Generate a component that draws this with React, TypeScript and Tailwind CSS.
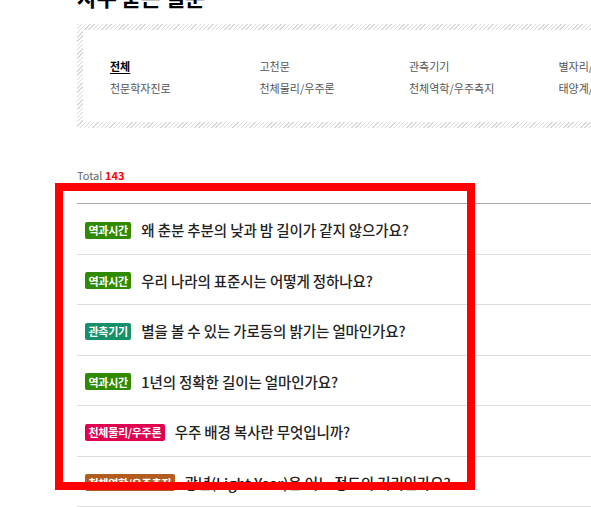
import React from "react";

type Faq = {
  category: string;
  title: string;
};

const badgeColors: Record<string, string> = {
  역과시간: "bg-[#2f8a00]",
  관측기기: "bg-[#16906a]",
  "천체물리/우주론": "bg-[#e1004f]",
  "천체역학/우주측지": "bg-[#b25c1f]",
};

const faqs: Faq[] = [
  { category: "역과시간", title: "왜 춘분 추분의 낮과 밤 길이가 같지 않으가요?" },
  { category: "역과시간", title: "우리 나라의 표준시는 어떻게 정하나요?" },
  { category: "관측기기", title: "별을 볼 수 있는 가로등의 밝기는 얼마인가요?" },
  { category: "역과시간", title: "1년의 정확한 길이는 얼마인가요?" },
  { category: "천체물리/우주론", title: "우주 배경 복사란 무엇입니까?" },
  { category: "천체역학/우주측지", title: "광년(Light Year)은 어느 정도의 거리인가요?" },
];

const filterRows = [
  ["전체", "고천문", "관측기기", "별자리/신화"],
  ["천문학자진로", "천체물리/우주론", "천체역학/우주측지", "태양계/행성"],
];

export default function App() {
  return (
    <div
      className="relative w-[591px] h-[507px] overflow-hidden bg-white"
      style={{ fontFamily: '"Noto Sans CJK KR", "Noto Sans", sans-serif' }}
    >
      <div className="w-[1000px] pl-[77px] flex flex-col">
        {/* Page heading, scrolled mostly out of view */}
        <h1 className="mt-[-15px] h-[22px] text-[22px] leading-[22px] font-bold text-black tracking-[-0.5px]">
          자주 묻는 질문
        </h1>

        {/* Category filter box with hatched frame */}
        <div className="mt-[17px] h-[104px] p-[6px] bg-[repeating-linear-gradient(135deg,#d9d9d9_0px,#d9d9d9_1px,transparent_1px,transparent_3px)]">
          <div className="h-full bg-white pl-[27px] pt-[23px]">
            {filterRows.map((row, ri) => (
              <div key={ri} className="flex h-[22px] items-center">
                {row.map((label) => (
                  <div key={label} className="w-[149.5px] shrink-0">
                    {label === "전체" ? (
                      <span className="text-[11px] font-bold text-black underline underline-offset-2">
                        {label}
                      </span>
                    ) : (
                      <span className="text-[11px] text-[#555]">{label}</span>
                    )}
                  </div>
                ))}
              </div>
            ))}
          </div>
        </div>

        {/* Result count */}
        <div className="mt-[40px] h-[14px] text-[11px] leading-[14px] text-[#666]">
          Total <span className="font-bold text-[#ff0000]">143</span>
        </div>

        {/* Question list */}
        <ul className="mt-[21px] border-t border-[#aaa]">
          {faqs.map((faq, i) => (
            <li
              key={i}
              className="flex h-[50.5px] items-center gap-[10px] border-b border-[#ddd] pl-[8px] pt-[3px]"
            >
              <span
                className={`${badgeColors[faq.category]} rounded-[2px] px-[3.5px] h-[17px] flex items-center text-[11px] font-bold text-white tracking-[-0.3px]`}
              >
                {faq.category}
              </span>
              <span className="text-[14.5px] font-medium text-[#222] tracking-[-0.1px]">
                {faq.title}
              </span>
            </li>
          ))}
        </ul>
      </div>

      {/* Highlight frame drawn over the list */}
      <div className="absolute left-[55px] top-[183px] w-[420px] h-[307px] border-[8px] border-[#ff0000] pointer-events-none" />
    </div>
  );
}
